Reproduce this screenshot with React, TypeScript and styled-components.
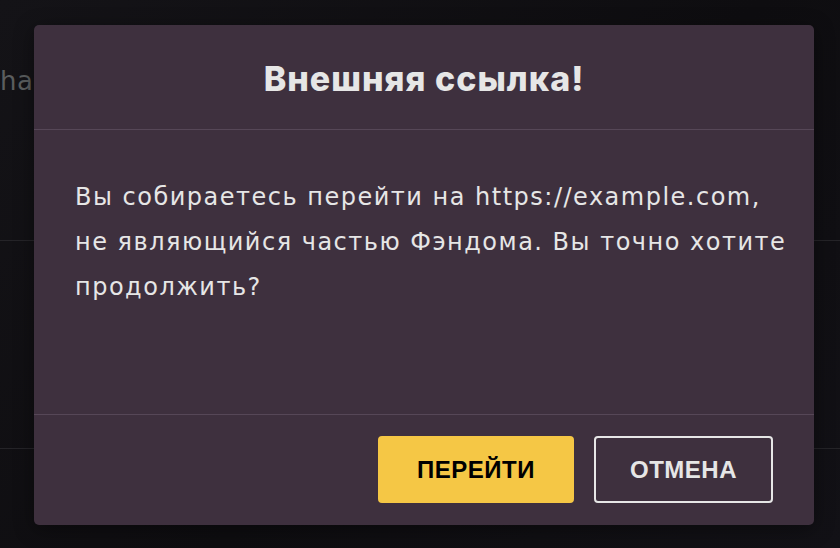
import React, { FC } from 'react'
import styled, { createGlobalStyle } from 'styled-components'

const GlobalStyle = createGlobalStyle`
  html, body {
    margin: 0;
    padding: 0;
    background: #111014;
  }
  * {
    box-sizing: border-box;
  }
`

const Page = styled.div`
  position: relative;
  width: 840px;
  height: 548px;
  overflow: hidden;
  background: linear-gradient(135deg, #141317 0%, #0e0d10 55%, #121116 100%);
  font-family: Inter, 'Liberation Sans', sans-serif;
`

const BackContent = styled.div`
  display: flex;
  flex-direction: column;
`

const BackTitle = styled.div`
  height: 241px;
  padding: 66px 0 0 0;
  font-family: 'DejaVu Sans', sans-serif;
  font-size: 26px;
  letter-spacing: 0.5px;
  color: #5b5e5f;
  white-space: nowrap;
  border-bottom: 1px solid #252428;
`

const BackRow = styled.div`
  height: 208px;
  border-bottom: 1px solid #252428;
`

const Modal = styled.div`
  position: absolute;
  left: 34px;
  top: 25px;
  width: 780px;
  height: 500px;
  display: flex;
  flex-direction: column;
  background: #3e303e;
  border-radius: 5px;
  box-shadow: 0 4px 20px rgba(0, 0, 0, 0.4);
`

const Header = styled.h1`
  margin: 0;
  height: 105px;
  display: flex;
  align-items: center;
  justify-content: center;
  padding-top: 2px;
  font-size: 34px;
  font-weight: 800;
  letter-spacing: 1px;
  color: #e6e6e6;
  border-bottom: 1px solid #564757;
`

const Body = styled.p`
  flex: 1;
  margin: 0;
  padding: 45px 27px 0 41px;
  font-family: 'DejaVu Sans', sans-serif;
  font-size: 24px;
  letter-spacing: 1.5px;
  line-height: 45px;
  color: #e6e6e6;
  border-bottom: 1px solid #564757;
`

const Footer = styled.div`
  height: 110px;
  display: flex;
  justify-content: flex-end;
  align-items: flex-start;
  gap: 20px;
  padding: 21px 41px 0 0;
`

const Button = styled.button<{ $primary?: boolean }>`
  height: 67px;
  padding: 0;
  width: ${p => (p.$primary ? '196px' : '179px')};
  border-radius: 4px;
  font-family: 'Liberation Sans', sans-serif;
  font-weight: 700;
  font-size: 24px;
  letter-spacing: 0.5px;
  text-transform: uppercase;
  cursor: pointer;
  background: ${p => (p.$primary ? '#f5c745' : 'transparent')};
  color: ${p => (p.$primary ? '#000' : '#e6e6e6')};
  border: 2px solid ${p => (p.$primary ? '#f5c745' : '#e6e6e6')};
`

const App: FC = () => (
  <Page>
    <GlobalStyle />
    <BackContent>
      <BackTitle>ha</BackTitle>
      <BackRow />
    </BackContent>
    <Modal>
      <Header>Внешняя ссылка!</Header>
      <Body>
        Вы собираетесь перейти на https://example.com, не являющийся частью Фэндома. Вы точно
        хотите продолжить?
      </Body>
      <Footer>
        <Button $primary>Перейти</Button>
        <Button>Отмена</Button>
      </Footer>
    </Modal>
  </Page>
)

export default App
